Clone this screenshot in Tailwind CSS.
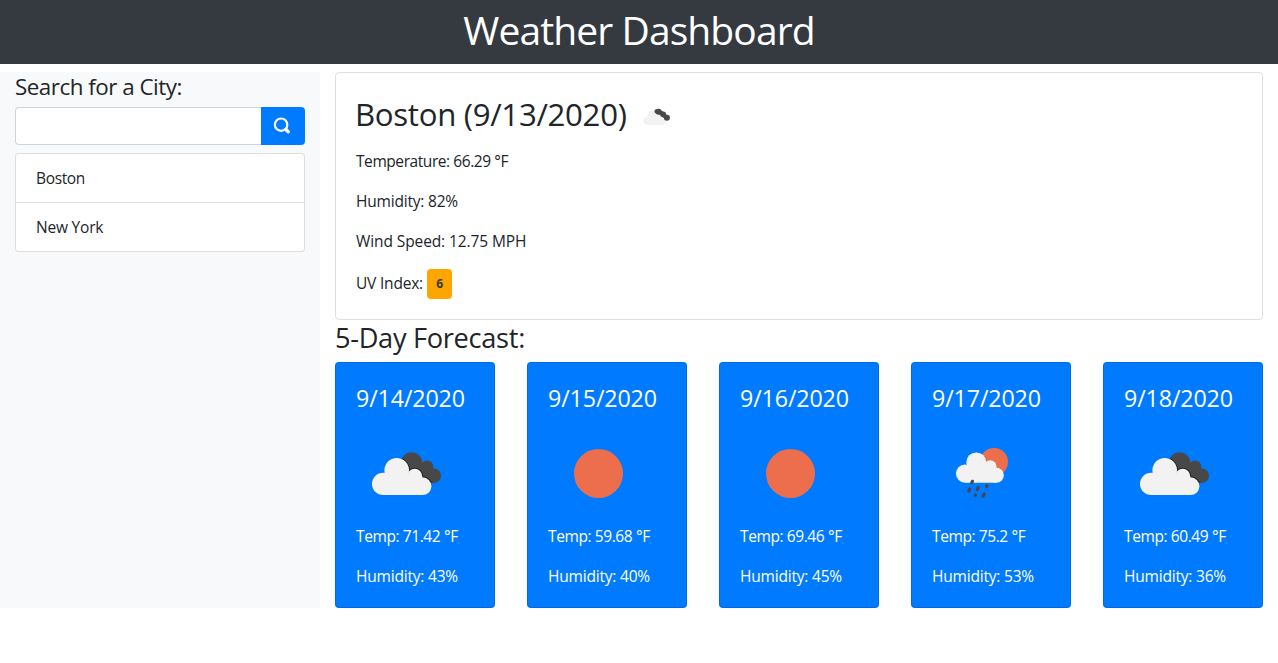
<!DOCTYPE html>
<html lang="en">
<head>
<meta charset="utf-8">
<title>Weather Dashboard</title>
<script src="https://cdn.jsdelivr.net/npm/@tailwindcss/browser@4"></script>
</head>
<body class="bg-white text-[#212529] text-[15.5px] leading-6 tracking-[-0.2px] font-['Open_Sans','Noto_Sans',sans-serif]">
<svg class="absolute size-0">
  <defs><clipPath id="darkCloud"><circle cx="55.7" cy="38.9" r="10.7"/><circle cx="71" cy="42.9" r="6.4"/><circle cx="77.8" cy="51.7" r="7.3"/><path d="M50 40L66 38L78 59L62 59Z"/></clipPath></defs>
  <symbol id="clouds" viewBox="0 0 100 100">
    <g clip-path="url(#darkCloud)"><path fill="#484849" d="M0 0H100V100H0Z"/>
    <g fill="#242427"><circle cx="40.7" cy="46.3" r="13.3"/><circle cx="58.7" cy="52.3" r="8.5"/><circle cx="66.5" cy="62.2" r="9.9"/></g></g>
    <g fill="#f2f2f2"><circle cx="27.2" cy="59.9" r="11.2"/><circle cx="40.7" cy="46.3" r="12.3"/><circle cx="58.7" cy="52.3" r="7.5"/><circle cx="66.5" cy="62.2" r="8.9"/><path d="M27 50H60L67 60V71.1H27Z"/></g>
  </symbol>
  <symbol id="sun" viewBox="0 0 100 100"><circle cx="50.5" cy="49.5" r="24.5" fill="#ec6e4c"/></symbol>
  <symbol id="rain" viewBox="0 0 100 100">
    <circle cx="62" cy="38" r="14" fill="#ec6e4c"/>
    <g fill="#f2f2f2"><circle cx="33" cy="49.6" r="9.1"/><circle cx="44.3" cy="38.4" r="10"/><circle cx="58.2" cy="42.7" r="6.4"/><circle cx="64.4" cy="51.2" r="7.5"/><path d="M33 42H58L64.4 50V58.7H33Z"/></g>
    <g stroke="#484849" stroke-width="3.2" stroke-linecap="round"><path d="M40.4 57.3L39.8 58.6M37.8 64.8L36.7 67.2M46.2 63.5L45.1 65.9M55 61.7L54.6 62.5M43.5 70.9L43.3 71.3M52.2 70L51.1 72.3"/></g>
  </symbol>
</svg>

<header class="h-16 bg-[#343a40] pt-[6px] text-center">
  <h1 class="text-[39px] leading-[48px] text-white tracking-[-0.9px]">Weather Dashboard</h1>
</header>

<div class="mt-2 flex">
  <aside class="w-80 h-[536px] bg-[#f8f9fa] px-[15px]">
    <h4 class="h-[35px] text-[22.4px] leading-[29px] tracking-[-0.5px]">Search for a City:</h4>
    <div class="flex h-[38px]">
      <input type="text" aria-label="City" class="min-w-0 flex-1 rounded-l border border-r-0 border-[#ced4da] bg-white px-3 outline-none">
      <button aria-label="Search" class="flex w-11 items-center justify-center rounded-r bg-[#007bff]">
        <svg class="-ml-[3px] size-[18px]" viewBox="0 0 18 18" fill="none" stroke="#fff"><circle cx="8.1" cy="7.7" r="6.2" stroke-width="2.2"/><path d="M12.9 12.5L15.2 14.8" stroke-width="3.4" stroke-linecap="round"/></svg>
      </button>
    </div>
    <ul class="mt-2 rounded border border-black/13 bg-white">
      <li class="h-[49px] border-b border-black/13 px-5 py-3 tracking-[-0.35px]">Boston</li>
      <li class="h-12 px-5 py-3">New York</li>
    </ul>
  </aside>

  <main class="flex-1 px-[15px]">
    <section class="h-[248px] rounded border border-black/13 p-5">
      <div class="flex h-14">
        <h2 class="-ml-px pt-[2px] text-[31.2px] leading-[38px] tracking-[-0.3px]">Boston (9/13/2020)</h2>
        <svg class="ml-[15px] mt-[12px] h-[22px] w-[30px]" viewBox="0 0 30 22">
          <g fill="#f2f2f2"><circle cx="5.6" cy="16" r="4.1"/><circle cx="10.4" cy="10.4" r="4.9"/><circle cx="17.2" cy="13" r="3.5"/><circle cx="20.3" cy="16.6" r="3.4"/><path d="M5.6 12H18L20.3 15V20.1H5.6Z"/></g>
          <path d="M14.6 6.4L17 6.6L21 9.4L24.7 12.7" fill="none" stroke="#484849" stroke-width="4.4" stroke-linecap="round" stroke-linejoin="round"/>
          <g fill="#484849"><circle cx="16.6" cy="6.7" r="3"/><circle cx="21.2" cy="9.4" r="2.8"/><circle cx="24.9" cy="12.7" r="3"/></g>
        </svg>
      </div>
      <p class="mb-4 tracking-[-0.43px]">Temperature: 66.29 °F</p>
      <p class="mb-4">Humidity: 82%</p>
      <p class="mb-[15px] tracking-[-0.1px]">Wind Speed: 12.75 MPH</p>
      <p class="flex h-[31px] items-center gap-1"><span class="-mt-px">UV Index:</span><span class="flex h-[30px] w-[25px] items-center justify-center rounded bg-[orange] pt-px text-xs font-bold text-[#343a40]">6</span></p>
    </section>
    <h3 class="h-[42px] pt-px text-[27.2px] leading-[34px] tracking-[-0.3px]">5-Day Forecast:</h3>
    <div class="grid grid-cols-5 gap-8 text-white">
      <article class="h-[246px] rounded border border-black/13 bg-[#007bff] p-5"><h4 class="h-[41px] pt-px text-[23.2px] leading-[29px] tracking-[-0.1px]">9/14/2020</h4><svg class="size-[100px]"><use href="#clouds"/></svg><p class="mb-4 tracking-[-0.4px]">Temp: 71.42 °F</p><p>Humidity: 43%</p></article>
      <article class="h-[246px] rounded border border-black/13 bg-[#007bff] p-5"><h4 class="h-[41px] pt-px text-[23.2px] leading-[29px] tracking-[-0.1px]">9/15/2020</h4><svg class="size-[100px]"><use href="#sun"/></svg><p class="mb-4 tracking-[-0.4px]">Temp: 59.68 °F</p><p>Humidity: 40%</p></article>
      <article class="h-[246px] rounded border border-black/13 bg-[#007bff] p-5"><h4 class="h-[41px] pt-px text-[23.2px] leading-[29px] tracking-[-0.1px]">9/16/2020</h4><svg class="size-[100px]"><use href="#sun"/></svg><p class="mb-4 tracking-[-0.4px]">Temp: 69.46 °F</p><p>Humidity: 45%</p></article>
      <article class="h-[246px] rounded border border-black/13 bg-[#007bff] p-5"><h4 class="h-[41px] pt-px text-[23.2px] leading-[29px] tracking-[-0.1px]">9/17/2020</h4><svg class="size-[100px]"><use href="#rain"/></svg><p class="mb-4 tracking-[-0.4px]">Temp: 75.2 °F</p><p>Humidity: 53%</p></article>
      <article class="h-[246px] rounded border border-black/13 bg-[#007bff] p-5"><h4 class="h-[41px] pt-px text-[23.2px] leading-[29px] tracking-[-0.1px]">9/18/2020</h4><svg class="size-[100px]"><use href="#clouds"/></svg><p class="mb-4 tracking-[-0.4px]">Temp: 60.49 °F</p><p>Humidity: 36%</p></article>
    </div>
  </main>
</div>
</body>
</html>
